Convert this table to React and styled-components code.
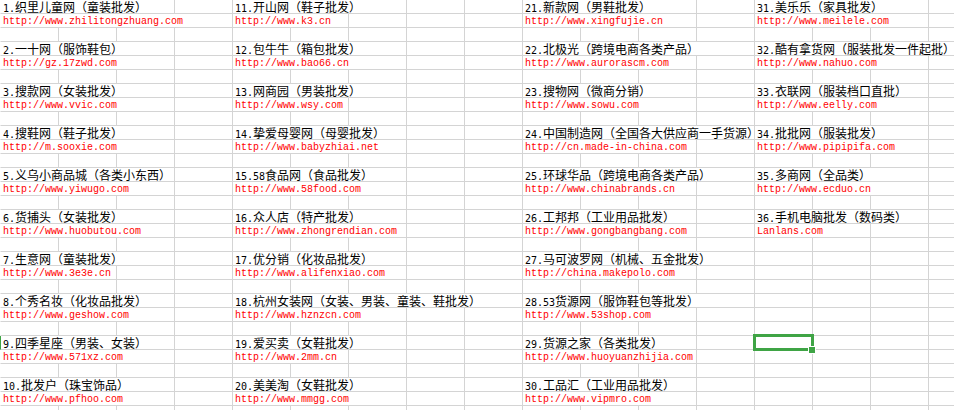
import React from 'react';
import styled, { createGlobalStyle } from 'styled-components';

const groups = [
    {
        col: 0,
        span: 4,
        items: [
            ['1.织里儿童网（童装批发）', 'http://www.zhilitongzhuang.com'],
            ['2.一十网（服饰鞋包）', 'http://gz.17zwd.com'],
            ['3.搜款网（女装批发）', 'http://www.vvic.com'],
            ['4.搜鞋网（鞋子批发）', 'http://m.sooxie.com'],
            ['5.义乌小商品城（各类小东西）', 'http://www.yiwugo.com'],
            ['6.货捕头（女装批发）', 'http://www.huobutou.com'],
            ['7.生意网（童装批发）', 'http://www.3e3e.cn'],
            ['8.个秀名妆（化妆品批发）', 'http://www.geshow.com'],
            ['9.四季星座（男装、女装）', 'http://www.571xz.com'],
            ['10.批发户（珠宝饰品）', 'http://www.pfhoo.com'],
        ],
    },
    {
        col: 4,
        span: 5,
        items: [
            ['11.开山网（鞋子批发）', 'http://www.k3.cn'],
            ['12.包牛牛（箱包批发）', 'http://www.bao66.cn'],
            ['13.网商园（男装批发）', 'http://www.wsy.com'],
            ['14.挚爱母婴网（母婴批发）', 'http://www.babyzhiai.net'],
            ['15.58食品网（食品批发）', 'http://www.58food.com'],
            ['16.众人店（特产批发）', 'http://www.zhongrendian.com'],
            ['17.优分销（化妆品批发）', 'http://www.alifenxiao.com'],
            ['18.杭州女装网（女装、男装、童装、鞋批发）', 'http://www.hznzcn.com'],
            ['19.爱买卖（女鞋批发）', 'http://www.2mm.cn'],
            ['20.美美淘（女鞋批发）', 'http://www.mmgg.com'],
        ],
    },
    {
        col: 9,
        span: 4,
        items: [
            ['21.新款网（男鞋批发）', 'http://www.xingfujie.cn'],
            ['22.北极光（跨境电商各类产品）', 'http://www.aurorascm.com'],
            ['23.搜物网（微商分销）', 'http://www.sowu.com'],
            ['24.中国制造网（全国各大供应商一手货源）', 'http://cn.made-in-china.com'],
            ['25.环球华品（跨境电商各类产品）', 'http://www.chinabrands.cn'],
            ['26.工邦邦（工业用品批发）', 'http://www.gongbangbang.com'],
            ['27.马可波罗网（机械、五金批发）', 'http://china.makepolo.com'],
            ['28.53货源网（服饰鞋包等批发）', 'http://www.53shop.com'],
            ['29.货源之家（各类批发）', 'http://www.huoyuanzhijia.com'],
            ['30.工品汇（工业用品批发）', 'http://www.vipmro.com'],
        ],
    },
    {
        col: 13,
        span: 4,
        items: [
            ['31.美乐乐（家具批发）', 'http://www.meilele.com'],
            ['32.酷有拿货网（服装批发一件起批）', 'http://www.nahuo.com'],
            ['33.衣联网（服装档口直批）', 'http://www.eelly.com'],
            ['34.批批网（服装批发）', 'http://www.pipipifa.com'],
            ['35.多商网（全品类）', 'http://www.ecduo.cn'],
            ['36.手机电脑批发（数码类）', 'Lanlans.com'],
        ],
    },
];

const ROWS = 30;
const SELECTED = { row: 24, col: 13 };

// split a title so the ascii runs get the half-width font
const splitText = (s) =>
    s.split(/([\x20-\x7e]+)/).filter(Boolean).map((p, i) =>
        /^[\x20-\x7e]+$/.test(p) ? <Latin key={i}>{p}</Latin> : <span key={i}>{p}</span>
    );

const App = () => {
    const rows = [];
    for (let r = 0; r < ROWS; r++) {
        const entry = Math.floor(r / 3);
        const kind = r % 3;
        rows.push(
            <Row key={r} $selected={r === SELECTED.row}>
                {kind !== 2 && groups.map(g => {
                    const item = g.items[entry];
                    if (!item) return null;
                    return (
                        <Cell key={g.col} $col={g.col} $span={g.span}>
                            {kind === 0
                                ? <Title>{splitText(item[0])}</Title>
                                : <Link>{item[1]}</Link>}
                        </Cell>
                    );
                })}
                {r === SELECTED.row && (
                    <SelectCell $col={SELECTED.col}>
                        <Frame>
                            <Handle />
                        </Frame>
                    </SelectCell>
                )}
            </Row>
        );
    }

    return (
        <>
            <GlobalStyle />
            <Sheet>{rows}</Sheet>
        </>
    );
};

export default App;

const GlobalStyle = createGlobalStyle`
    html, body {
        margin: 0;
        padding: 0;
        background: #fff;
        overflow: hidden;
    }
`;

const Sheet = styled.div`
    width: 1000px;
    height: 410px;
    overflow: hidden;
`;

const Row = styled.div`
    display: grid;
    grid-template-columns: repeat(17, 58px);
    height: 13px;
    border-bottom: 1px solid #d4d4d4;
    border-left: 1px solid ${p => (p.$selected ? '#3fa445' : 'transparent')};
    background: repeating-linear-gradient(to right, transparent 0 57px, #d4d4d4 57px 58px);
    background-clip: padding-box;
`;

const Cell = styled.div`
    grid-column: ${p => p.$col + 1} / span ${p => p.$span};
    grid-row: 1;
    margin-right: 1px;
    padding-left: 2px;
    overflow-x: clip;
    white-space: nowrap;
    height: 13px;
`;

const Title = styled.span`
    display: inline-block;
    vertical-align: top;
    height: 13px;
    line-height: 13px;
    padding-right: 1px;
    background: #fff;
    color: #000;
    font-family: "Noto Sans CJK SC", sans-serif;
    font-size: 12px;
`;

const Latin = styled.span`
    font-family: "DejaVu Sans Mono", monospace;
    font-size: 10px;
`;

const Link = styled.span`
    display: inline-block;
    vertical-align: top;
    box-sizing: border-box;
    height: 13px;
    padding-top: 2px;
    line-height: 11px;
    padding-right: 1px;
    background: #fff;
    color: #ff0000;
    font-family: "Liberation Mono", monospace;
    font-size: 10px;
`;

const SelectCell = styled.div`
    grid-column: ${p => p.$col + 1} / span 1;
    grid-row: 1;
    position: relative;
`;

const Frame = styled.div`
    position: absolute;
    left: -2px;
    top: -2px;
    width: 61px;
    height: 17px;
    box-sizing: border-box;
    border: 3px solid #3fa445;
`;

const Handle = styled.div`
    position: absolute;
    right: -5px;
    bottom: -6px;
    width: 6px;
    height: 6px;
    background: #3fa445;
    border: 1px solid #fff;
`;
